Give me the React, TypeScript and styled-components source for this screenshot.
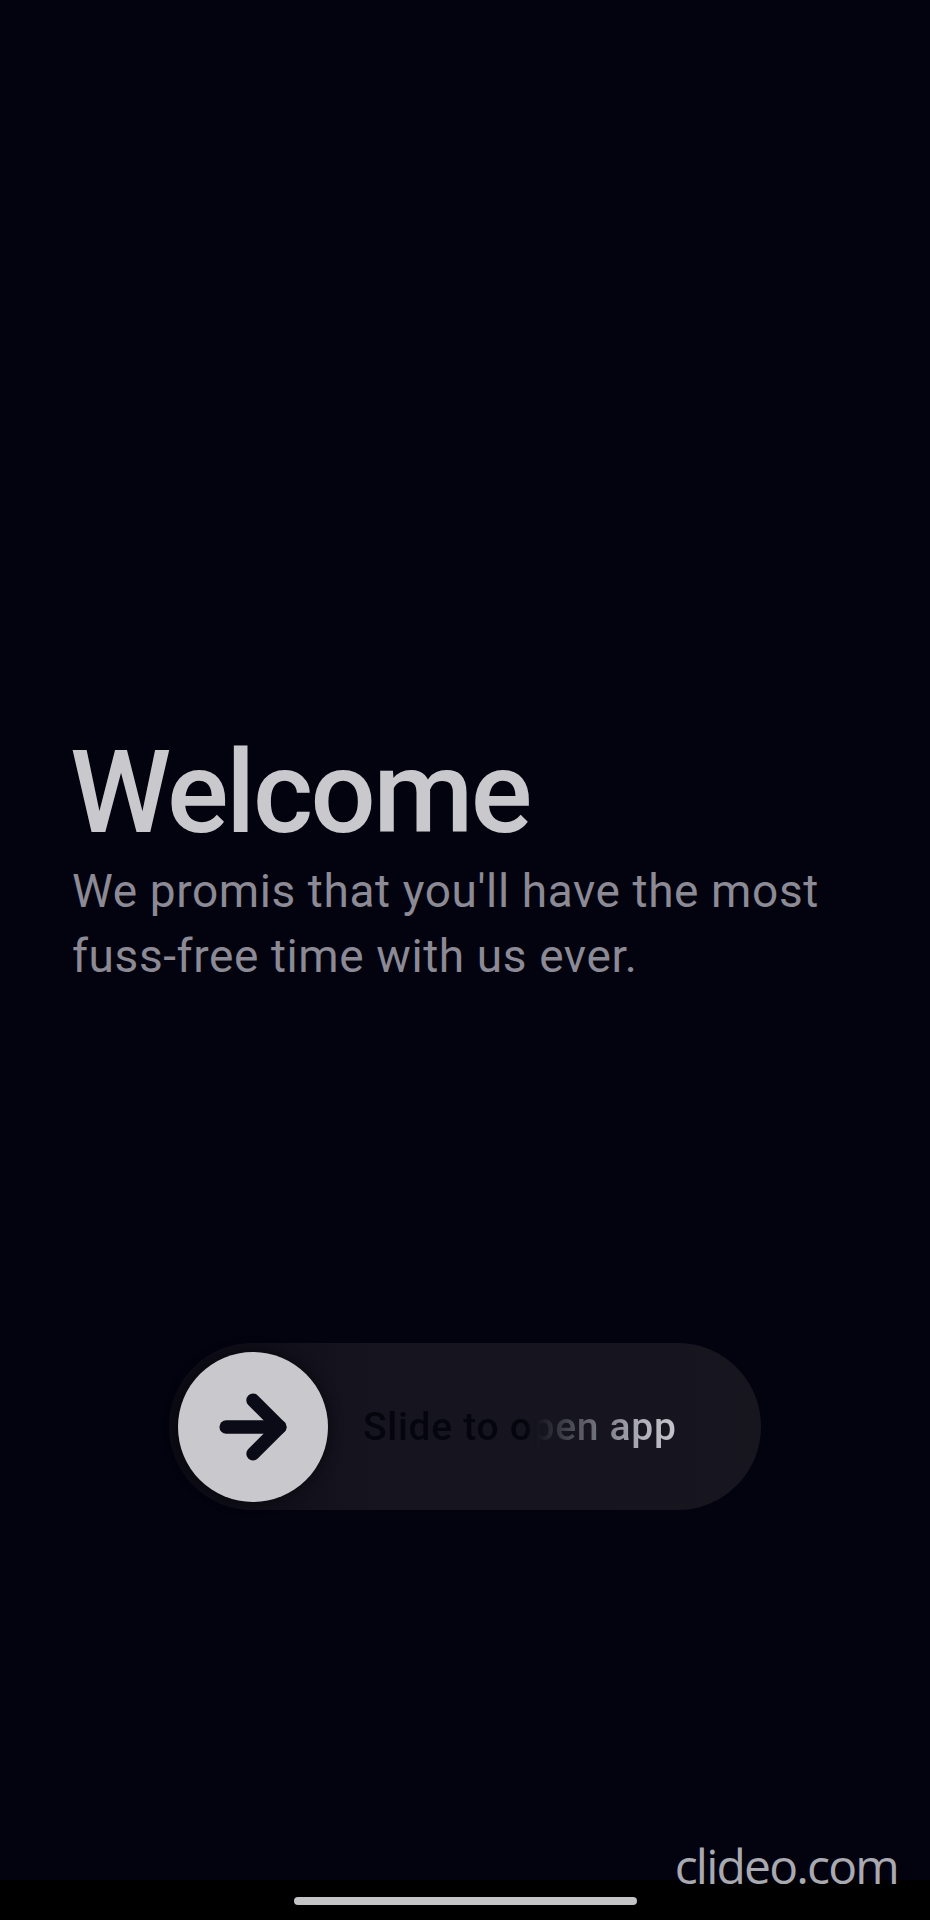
import React from "react";
import styled, { createGlobalStyle } from "styled-components";

const Global = createGlobalStyle`
  html, body { margin: 0; padding: 0; background: #03030f; }
  body { font-family: Roboto, "Noto Sans", sans-serif; }
`;

const Screen = styled.div`
  position: relative;
  width: 930px;
  height: 1920px;
  background: #03030f;
  display: flex;
  flex-direction: column;
  overflow: hidden;
`;

const Hero = styled.section`
  display: flex;
  flex-direction: column;
  padding: 735px 0 0 70px;
`;

const Title = styled.h1`
  margin: 0;
  font-family: Roboto, sans-serif;
  font-weight: 500;
  font-size: 115px;
  line-height: 1;
  color: #c9c8cd;
  letter-spacing: -2.5px;
`;

const Subtitle = styled.p`
  margin: 9px 0 0 2px;
  font-family: Roboto, sans-serif;
  font-weight: 400;
  font-size: 46px;
  line-height: 65px;
  letter-spacing: 0.6px;
  color: #8b8a95;
  width: 820px;
`;

const SliderWrap = styled.div`
  display: flex;
  padding: 0 0 0 169px;
  margin-top: 354px;
`;

const Track = styled.div`
  width: 592px;
  height: 167px;
  box-sizing: border-box;
  padding: 9px;
  border-radius: 84px;
  background: linear-gradient(90deg, #0c0b15 0%, #15141f 35%, #17161f 100%);
  display: flex;
  align-items: center;
  gap: 35px;
`;

const Knob = styled.div`
  width: 150px;
  height: 150px;
  border-radius: 50%;
  background: #c9c8cd;
  display: flex;
  align-items: center;
  justify-content: center;
  box-shadow: 0 0 14px rgba(0, 0, 0, 0.55);
  flex-shrink: 0;
`;

const SlideText = styled.span`
  font-family: Roboto, sans-serif;
  font-weight: 500;
  font-size: 39px;
  letter-spacing: 0.7px;
  background: linear-gradient(
    90deg,
    #05050d 0%,
    #05050d 52%,
    #3a3a45 63%,
    #7a7a85 76%,
    #b0b0b8 89%,
    #c6c5cc 100%
  );
  -webkit-background-clip: text;
  background-clip: text;
  color: transparent;
`;

const Watermark = styled.div`
  position: absolute;
  right: 32px;
  bottom: 22px;
  font-family: "Open Sans", sans-serif;
  font-size: 48px;
  letter-spacing: -1.8px;
  color: #a9a9b1;
  z-index: 2;
`;

const NavBar = styled.div`
  margin-top: auto;
  height: 40px;
  background: #000;
  display: flex;
  justify-content: center;
  align-items: flex-start;
  padding-top: 17px;
  box-sizing: border-box;
`;

const HomeIndicator = styled.div`
  width: 343px;
  height: 8px;
  border-radius: 4px;
  background: #c4c4c6;
`;

function Arrow() {
  return (
    <svg width="92" height="92" viewBox="0 0 24 24" fill="none" stroke="#0b0b18" strokeWidth="3.5" strokeLinecap="round" strokeLinejoin="round">
      <path d="M5 12h14" />
      <path d="m12 5 7 7-7 7" />
    </svg>
  );
}

export default function App() {
  return (
    <>
      <Global />
      <Screen>
        <Hero>
          <Title>Welcome</Title>
          <Subtitle>We promis that you'll have the most fuss-free time with us ever.</Subtitle>
        </Hero>
        <SliderWrap>
          <Track>
            <Knob>
              <Arrow />
            </Knob>
            <SlideText>Slide to open app</SlideText>
          </Track>
        </SliderWrap>
        <NavBar>
          <HomeIndicator />
        </NavBar>
        <Watermark>clideo.com</Watermark>
      </Screen>
    </>
  );
}
